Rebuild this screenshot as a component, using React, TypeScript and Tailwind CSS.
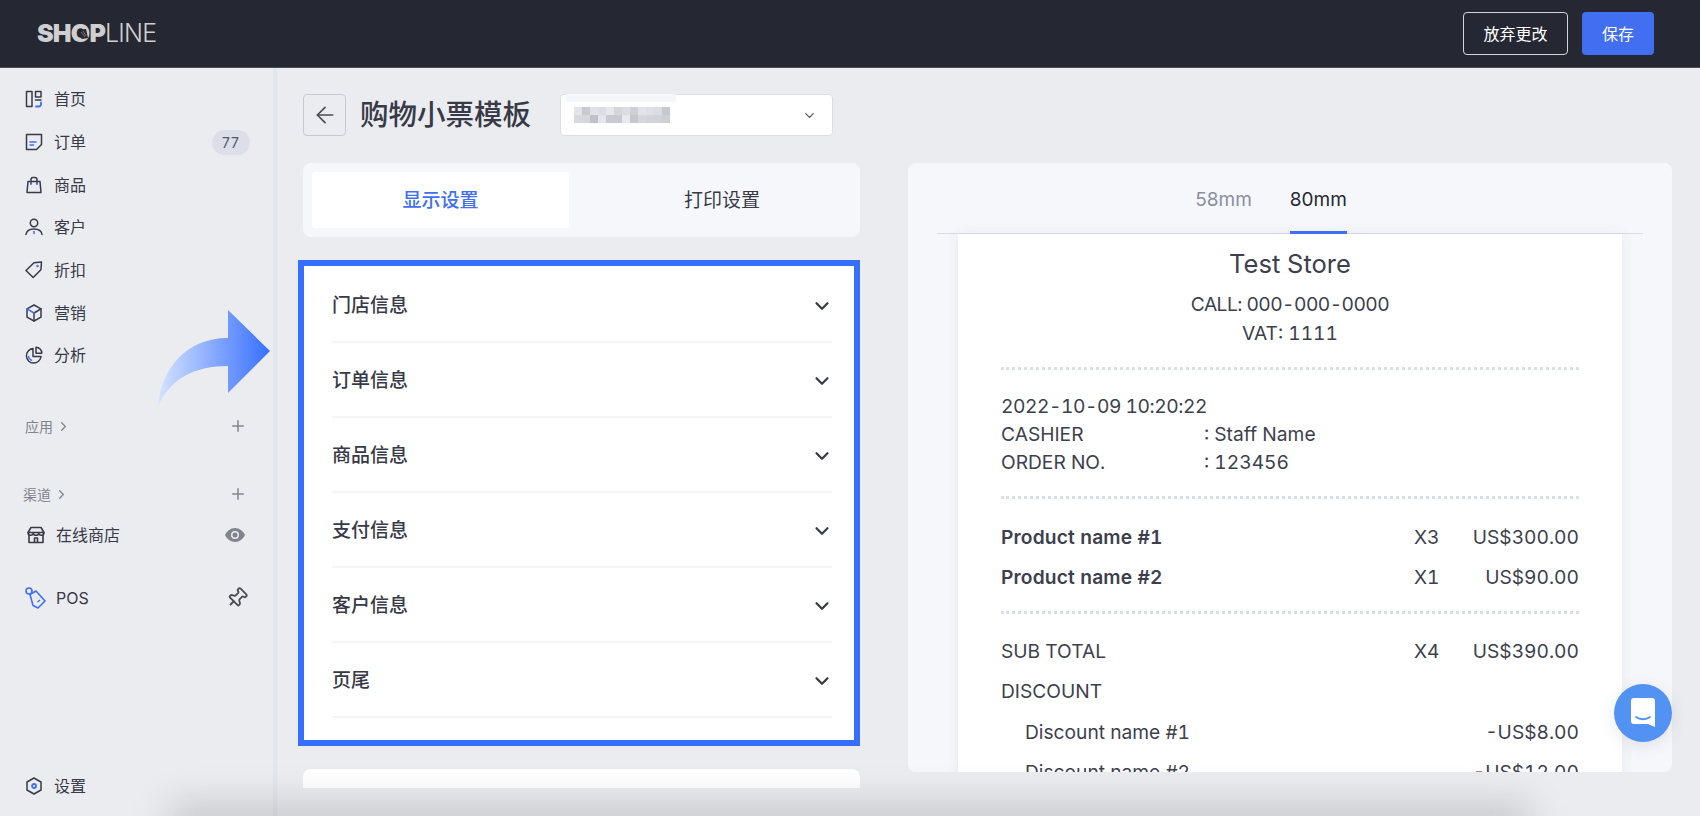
import type { ReactNode } from "react";
import { ChevronDown, ChevronRight, ArrowLeft, Plus, Pin } from "lucide-react";

const ink = "#383a47";
const blue = "#3f6ff6";

function Icon({ children }: { children: ReactNode }) {
  return (
    <svg width="18" height="18" viewBox="0 0 18 18" fill="none" stroke={ink} strokeWidth="1.5" strokeLinejoin="round" strokeLinecap="round" className="shrink-0">
      {children}
    </svg>
  );
}

const navItems: { label: string; badge?: string; icon: ReactNode }[] = [
  {
    label: "首页",
    icon: (
      <Icon>
        <rect x="1.5" y="1.5" width="5.5" height="15" />
        <rect x="10.5" y="1.5" width="5.5" height="5.5" />
        <path d="M10.5 10h5.5" />
        <path d="M16 12.5v1.5a2.5 2.5 0 0 1-2.5 2.5H11" stroke={blue} strokeWidth="1.8" />
      </Icon>
    ),
  },
  {
    label: "订单",
    badge: "77",
    icon: (
      <Icon>
        <path d="M1.5 1.5h15v10l-5 5h-10z" />
        <path d="M5 9h6" stroke={blue} />
        <path d="M5 12h3.5" stroke={blue} />
      </Icon>
    ),
  },
  {
    label: "商品",
    icon: (
      <Icon>
        <path d="M3 5.5h12l1 11H2z" />
        <path d="M6 8V3.5A2 2 0 0 1 8 1.5h2a2 2 0 0 1 2 2V8" />
        <path d="M6 6.5v1.5M12 6.5v1.5" stroke={blue} />
      </Icon>
    ),
  },
  {
    label: "客户",
    icon: (
      <Icon>
        <circle cx="9" cy="5" r="3.7" />
        <path d="M1 16.5c.5-3.6 3.6-5.5 8-5.5s7.5 1.9 8 5.5" />
        <path d="M9 13.5v2" stroke={blue} />
      </Icon>
    ),
  },
  {
    label: "折扣",
    icon: (
      <Icon>
        <path d="M1 9.5 9 1.8l7.500-.8-.6 7.700L8.200 16.500z" />
        <circle cx="12.5" cy="5" r=".5" stroke={blue} />
      </Icon>
    ),
  },
  {
    label: "营销",
    icon: (
      <Icon>
        <path d="M9 1l7 3.800v8.400L9 17l-7-3.800V4.800z" />
        <path d="M9 9l7-4.200M9 9v8" />
        <path d="M2 4.800 9 9" stroke={blue} />
      </Icon>
    ),
  },
  {
    label: "分析",
    icon: (
      <Icon>
        <path d="M8 2.500A7.300 7.300 0 1 0 16 10.500H8z" />
        <path d="M11 1.200a6 6 0 0 1 5.800 6H11z" />
        <path d="M3.500 10.500a5 5 0 0 0 3 3.800" stroke={blue} />
      </Icon>
    ),
  },
];

const sections = ["门店信息", "订单信息", "商品信息", "支付信息", "客户信息", "页尾"];

// mosaic over the store name, one row per pixel band
const mosaic = [
  ["#e3e4e9", "#c9cad1", "#e0e1e6", "#dcdde3", "#e6e7eb", "#d5d6dc", "#dcdde3", "#d0d1d8", "#e2e3e8", "#dfe0e5", "#dcdde2", "#c8c9d0"],
  ["#d8d9df", "#d6d7dd", "#bfc0c9", "#e4e5ea", "#c9cad1", "#c9cad1", "#e8e9ec", "#c6c7cf", "#d6d7dd", "#d2d3d9", "#d2d3d9", "#cfd0d6"],
];

function Row({ left, mid, right, bold }: { left: string; mid?: string; right?: string; bold?: boolean }) {
  return (
    <div className="flex h-[40.5px] items-center">
      <span className={bold ? "flex-1 font-semibold tracking-[0.15px]" : "flex-1"}>{left}</span>
      {right && (
        <div className={mid ? "flex w-[165px] justify-between" : "flex w-[165px] justify-end"}>
          {mid && <span>{mid}</span>}
          <span>{right}</span>
        </div>
      )}
    </div>
  );
}

function Dots() {
  return <div className="border-t-[3px] border-dotted border-[#d9dfea]" />;
}

export default function App() {
  return (
    <div className="relative flex h-[817px] w-[1700px] flex-col overflow-hidden bg-[#ebecf0] [font-family:Inter,'Noto_Sans_CJK_SC',sans-serif] text-[#383a47]">
      <header className="flex h-[68px] shrink-0 items-center justify-between border-b border-[#4b4d58] bg-[#252733] pl-[37px] pr-[46px]">
        <div className="flex items-center text-[25px] leading-none tracking-[-0.8px] text-[#cfcfcf]">
          <span className="font-black">SH</span>
          <span className="relative font-black">
            O
            <svg width="12" height="12" viewBox="0 0 12 12" className="absolute left-[6px] top-[7px]">
              <path d="M1 2 9 1l2 9-6 1C2 9 1 6 1 2Z" fill="#252733" />
              <path d="M4 4l4 5M6 3l3 5" stroke="#8a8b92" strokeWidth="0.8" />
            </svg>
          </span>
          <span className="font-black">P</span>
          <span className="font-light">LINE</span>
        </div>
        <div className="flex items-center gap-[14px]">
          <button className="h-[43px] w-[105px] rounded-[4px] border border-[#d5d5d8] text-[16px] text-white">放弃更改</button>
          <button className="h-[43px] w-[72px] rounded-[4px] bg-[#426ef2] text-[16px] text-white">保存</button>
        </div>
      </header>

      <div className="flex min-h-0 flex-1">
        <aside className="flex w-[277px] shrink-0 flex-col border-r-4 border-[#e4e6ed] pb-[19px] pt-[10px]">
          {navItems.map((item) => (
            <div key={item.label} className="flex h-[42.7px] items-center gap-[11px] pl-[25px] pr-[23px] text-[16px]">
              {item.icon}
              <span className="flex-1">{item.label}</span>
              {item.badge && (
                <span className="rounded-full bg-[#dcdfe9] px-[10px] py-[2px] text-[14px] tracking-[1px] text-[#555766]">{item.badge}</span>
              )}
            </div>
          ))}

          <div className="mt-[39px] flex items-center pl-[25px] pr-[26px] text-[14px] text-[#81848f]">
            <span>应用</span>
            <ChevronRight size={15} className="ml-[3px]" />
            <Plus size={18} className="ml-auto" />
          </div>

          <div className="mt-[47px] flex items-center pl-[23px] pr-[26px] text-[14px] text-[#81848f]">
            <span>渠道</span>
            <ChevronRight size={15} className="ml-[3px]" />
            <Plus size={18} className="ml-auto" />
          </div>

          <div className="mt-[18px] flex h-[24px] items-center pl-[27px] pr-[28px] text-[16px]">
            <svg width="18" height="18" viewBox="0 0 18 18" fill="none" stroke={ink} strokeWidth="1.6" strokeLinejoin="round" className="mr-[11px]">
              <path d="M4 1.5h10l3 5H1z" />
              <path d="M1 6.5c0 2 1.500 2.800 2.700 2.800 1.300 0 2.500-.8 2.600-2 .2 1.200 1.400 2 2.700 2s2.500-.8 2.700-2c.1 1.200 1.300 2 2.600 2 1.200 0 2.700-.8 2.700-2.800" />
              <path d="M2 9v7.500h14V9M7.500 16.500V12h3v4.500" />
            </svg>
            <span className="flex-1">在线商店</span>
            <svg width="20" height="14" viewBox="0 0 20 14">
              <path d="M10 0c4.500 0 8 3 10 7-2 4-5.500 7-10 7S2 11 0 7c2-4 5.500-7 10-7Z" fill="#81848f" />
              <circle cx="10" cy="7" r="4" fill="#ebecf0" />
              <circle cx="10" cy="7" r="2.500" fill="#81848f" />
            </svg>
          </div>

          <div className="mt-[39px] flex h-[24px] items-center pl-[25px] pr-[25px] text-[16px]">
            <svg width="22" height="22" viewBox="0 0 22 22" fill="none" stroke={blue} strokeWidth="1.6" strokeLinejoin="round" className="mr-[9px]">
              <circle cx="4" cy="4" r="3" />
              <path d="M5 7.500 11 4l9 10-7 7-5-2.500z" />
              <path d="M12.500 15l2.500-2" />
            </svg>
            <span className="flex-1">POS</span>
            <Pin size={22} className="rotate-45 text-[#4a4c58]" />
          </div>

          <div className="mt-auto flex h-[24px] items-center gap-[11px] pl-[25px] text-[16px]">
            <Icon>
              <path d="M9 1l7 4v8l-7 4-7-4V5z" />
              <circle cx="9" cy="9" r="2" stroke={blue} strokeWidth="1.8" />
            </Icon>
            <span>设置</span>
          </div>
        </aside>

        <main className="flex min-w-0 flex-1 items-start gap-[48px] pl-[21px] pt-[26px]">
          <div className="h-[694px] w-[562px] shrink-0 overflow-hidden">
            <div className="flex items-center pl-[5px]">
              <button className="flex h-[42px] w-[43px] items-center justify-center rounded-[4px] border border-[#c6c9d4]">
                <ArrowLeft size={26} strokeWidth={1.6} className="text-[#4a4c58]" />
              </button>
              <h1 className="ml-[14px] text-[28.5px] font-medium leading-[42px]">购物小票模板</h1>
              <div className="relative ml-[29px] flex h-[42px] w-[273px] items-center rounded-[4px] border border-[#dcdee6] bg-white pl-[13px] pr-[15px]">
                <div className="absolute left-[5px] top-[-1px] h-[8px] w-[110px] bg-[#f5f6f9]" />
                <div className="flex flex-col">
                  {mosaic.map((band, i) => (
                    <div key={i} className="flex">
                      {band.map((c, j) => (
                        <div key={j} className="h-[8px] w-[8px]" style={{ background: c }} />
                      ))}
                    </div>
                  ))}
                </div>
                <ChevronDown size={15} className="ml-auto text-[#555766]" />
              </div>
            </div>

            <div className="ml-[5px] mt-[27px] flex h-[74px] rounded-[8px] bg-[#f6f7fb] p-[9px] text-[19px]">
              <div className="flex w-[257px] items-center justify-center rounded-[4px] bg-white pt-[2px] font-medium text-[#426ef2]">显示设置</div>
              <div className="flex flex-1 items-center justify-center pl-[24px] pt-[2px]">打印设置</div>
            </div>

            <div className="mt-[23px] h-[486px] border-[6px] border-[#366ffe] bg-white pl-[28px] pr-[22px] pt-[2px]">
              {sections.map((s) => (
                <div key={s} className="flex h-[75px] items-center justify-between border-b-2 border-[#f3f4f7] text-[19px] font-medium">
                  <span className="mt-[3px]">{s}</span>
                  <ChevronDown size={22} strokeWidth={2.4} className="mr-[-1px] mt-[2px]" />
                </div>
              ))}
            </div>

            <div className="ml-[5px] mt-[23px] h-[40px] rounded-[8px] bg-white" />
          </div>

          <div className="mt-[69px] h-[609px] w-[764px] shrink-0 overflow-hidden rounded-[8px] bg-[#f6f7fb]">
            <div className="mx-[29px] flex h-[71px] items-end justify-center gap-[38px] border-b border-[#d9dbe3] pr-[38px] text-[19px]">
              <span className="pb-[16px] leading-[34px] text-[#8b8e9b]">58mm</span>
              <span className="relative pb-[16px] leading-[34px] text-[#252733]">
                80mm
                <span className="absolute bottom-[-1px] left-0 right-0 h-[3px] bg-[#426ef2]" />
              </span>
            </div>
            <div className="mx-[50px] h-[600px] bg-white px-[43px] pt-[12px] text-[19.2px] tabular-nums text-[#3d3f4e] shadow-[0_0_12px_rgba(60,70,100,0.08)]">
              <div className="text-center">
                <div className="text-[25.5px] leading-[36px]">Test Store</div>
                <div className="mt-[8px] leading-[29px] tracking-[-0.55px]">CALL: 000-000-0000</div>
                <div className="leading-[29px]">VAT: 1111</div>
              </div>
              <div className="mt-[19px]"><Dots /></div>
              <div className="mt-[22px] leading-[28px]">
                <div className="tracking-[-0.45px]">2022-10-09 10:20:22</div>
                <div className="flex"><span className="w-[203px]">CASHIER</span><span>: Staff Name</span></div>
                <div className="flex"><span className="w-[203px]">ORDER NO.</span><span>: 123456</span></div>
              </div>
              <div className="mt-[20px]"><Dots /></div>
              <div className="mt-[18px]">
                <Row left="Product name #1" mid="X3" right="US$300.00" bold />
                <Row left="Product name #2" mid="X1" right="US$90.00" bold />
              </div>
              <div className="mt-[13px]"><Dots /></div>
              <div className="mt-[17px]">
                <Row left="SUB TOTAL" mid="X4" right="US$390.00" />
                <Row left="DISCOUNT" />
                <div className="pl-[24px]">
                  <Row left="Discount name #1" right="-US$8.00" />
                  <Row left="Discount name #2" right="-US$12.00" />
                </div>
              </div>
            </div>
          </div>
        </main>
      </div>

      {/* arrow annotation */}
      <svg width="120" height="100" viewBox="0 0 120 100" className="absolute left-[155px] top-[308px]">
        <defs>
          <linearGradient id="arrowFill" x1="0" y1="0" x2="1" y2="0">
            <stop offset="0" stopColor="#d6e3ff" />
            <stop offset="1" stopColor="#366ffe" />
          </linearGradient>
        </defs>
        <path d="M3 98C6 62 30 30 73 30V2l42 41-42 42V58C40 58 16 70 3 98Z" fill="url(#arrowFill)" />
      </svg>

      {/* chat launcher */}
      <div className="absolute left-[1614px] top-[684px] flex h-[58px] w-[58px] items-center justify-center rounded-full bg-[#5192f3] shadow-[0_4px_16px_rgba(60,70,100,0.12)]">
        <svg width="26" height="30" viewBox="0 0 26 30" fill="none">
          <path d="M4 0h18a3 3 0 0 1 3 3v26l-7-3H4a3 3 0 0 1-3-3V3a3 3 0 0 1 3-3z" fill="#fff" />
          <path d="M6 19c4 3 10 3 14 0" stroke="#5192f3" strokeWidth="1.8" strokeLinecap="round" />
        </svg>
      </div>

      {/* window shadow along the bottom edge */}
      <div className="pointer-events-none absolute bottom-[-26px] left-[170px] right-[170px] h-[40px] bg-black/15 blur-[18px]" />
      <div className="absolute bottom-0 left-0 right-0 h-px bg-white" />
    </div>
  );
}
